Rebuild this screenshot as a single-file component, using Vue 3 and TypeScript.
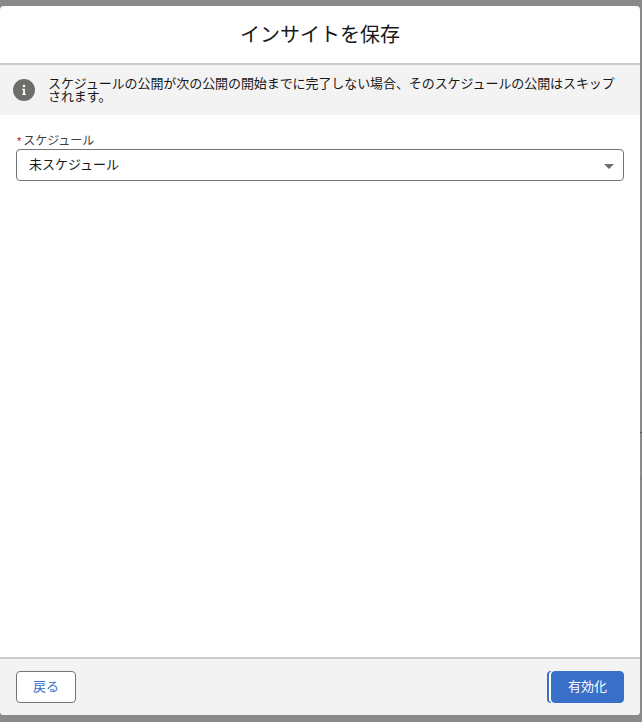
<script setup lang="ts">
const notice: string = 'スケジュールの公開が次の公開の開始までに完了しない場合、そのスケジュールの公開はスキップされます。'
const ticks: { top: number; color: string }[] = [
  { top: 343, color: '#7d7d7d' },
  { top: 392, color: '#7d7d7d' },
  { top: 432, color: '#505050' },
  { top: 478, color: '#6e6e6e' },
]
</script>

<template>
  <div class="backdrop">
    <i v-for="t in ticks" :key="t.top" class="tick" :style="{ top: t.top + 'px', background: t.color }"></i>
    <div class="modal">
      <header class="head"><h1>インサイトを保存</h1></header>
      <div class="notice">
        <svg class="info" width="22" height="22" viewBox="0 0 22 22" aria-hidden="true">
          <circle cx="11" cy="11" r="11" fill="#706e6b" />
          <circle cx="11" cy="7" r="1.3" fill="#fff" />
          <path d="M9.2 9.8h2.7v5h.9v1.2H9.2v-1.2h.9v-3.8h-.9z" fill="#fff" />
        </svg>
        <p>{{ notice }}</p>
      </div>
      <main class="body">
        <div class="label"><span class="req">*</span>スケジュール</div>
        <div class="select">
          <span class="value">未スケジュール</span>
          <i class="caret"></i>
        </div>
      </main>
      <footer class="foot">
        <button class="btn back">戻る</button>
        <div class="group">
          <span class="sliver"></span>
          <button class="btn primary">有効化</button>
        </div>
      </footer>
    </div>
  </div>
</template>

<style>
html, body { margin: 0; background: #8a8a8a; }
</style>

<style scoped>
.backdrop {
  position: relative;
  width: 642px;
  height: 722px;
  box-sizing: border-box;
  padding: 6px 2px 7px 0;
  background: #8a8a8a;
  font-family: "Liberation Sans", "Noto Sans CJK JP", sans-serif;
  overflow: hidden;
}
.tick {
  position: absolute;
  left: 640px;
  width: 2px;
  height: 1px;
}
.modal {
  height: 100%;
  display: flex;
  flex-direction: column;
  background: #fff;
  border-radius: 4px;
  overflow: hidden;
}
.head {
  height: 57px;
  flex: none;
  box-sizing: content-box;
  display: flex;
  align-items: center;
  justify-content: center;
  border-bottom: 2px solid #c9c9c9;
}
h1 {
  margin: 2px 0 0;
  font-size: 20px;
  font-weight: 400;
  line-height: 25px;
  color: #181818;
}
.notice {
  height: 50px;
  flex: none;
  box-sizing: border-box;
  display: flex;
  align-items: center;
  gap: 13px;
  padding: 0 20px 0 13px;
  background: #f3f3f3;
}
.info { flex: none; }
p {
  margin: 0;
  font-size: 13px;
  line-height: 13px;
  letter-spacing: -0.08px;
  color: #181818;
}
.body {
  flex: 1;
  padding: 18px 16px 0;
}
.label {
  height: 16px;
  font-size: 12px;
  line-height: 16px;
  letter-spacing: -0.05px;
  color: #3e3e3c;
}
.req {
  color: #ba0517;
  font-size: 11px;
  margin: 0 2px 0 1px;
}
.select {
  height: 32px;
  box-sizing: border-box;
  display: flex;
  align-items: center;
  justify-content: space-between;
  padding: 0 9px 0 12px;
  border: 1px solid #747474;
  border-radius: 4px;
  font-size: 13px;
  color: #181818;
}
.value { margin-bottom: 4px; }
.caret {
  width: 0;
  height: 0;
  margin-top: 3px;
  border-left: 5.5px solid transparent;
  border-right: 5.5px solid transparent;
  border-top: 5.5px solid #706e6b;
}
.foot {
  height: 58px;
  flex: none;
  box-sizing: border-box;
  display: flex;
  align-items: center;
  justify-content: space-between;
  padding: 0 16px;
  background: #f3f3f3;
  border-top: 2px solid #c9c9c9;
}
.btn {
  height: 32px;
  box-sizing: border-box;
  padding: 0;
  border-radius: 4px;
  font: inherit;
  font-size: 13px;
  line-height: 28px;
}
.back {
  width: 60px;
  background: #fff;
  border: 1px solid #747474;
  color: #3a6fc9;
}
.group {
  display: flex;
  align-items: center;
}
.sliver {
  width: 4px;
  height: 32px;
  box-sizing: border-box;
  background: #fff;
  border: 1px solid #3a6fc9;
  border-left-width: 2px;
  border-right: none;
  border-radius: 4px 0 0 4px;
}
.primary {
  width: 73px;
  background: #3a6fc9;
  border: 1px solid #3a6fc9;
  color: #fff;
}
</style>
